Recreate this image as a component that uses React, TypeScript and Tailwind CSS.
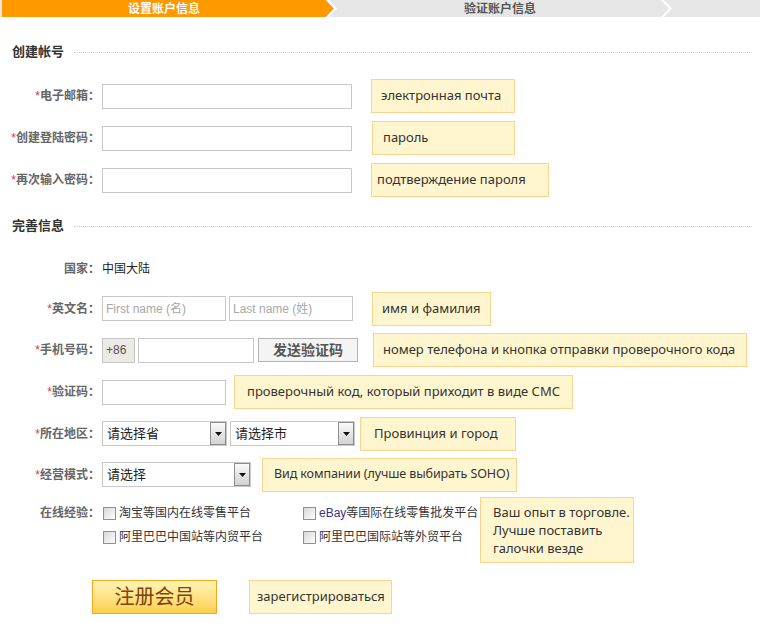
import React from "react";

function Label({ text, req = true }: { text: string; req?: boolean }) {
  return (
    <span className="w-[100px] shrink-0 text-right text-[12px] font-bold text-[#666]">
      {req && <span className="font-normal text-[#e5343a]">*</span>}
      {text}：
    </span>
  );
}

function Note({ className, children }: { className: string; children: React.ReactNode }) {
  return (
    <div
      className={`flex h-[34px] shrink-0 items-center whitespace-nowrap border border-[#f8d48e] bg-[#fff6cf] font-['Noto_Sans',sans-serif] text-[13px] text-[#333] ${className}`}
    >
      {children}
    </div>
  );
}

function Select({ text, className }: { text: string; className: string }) {
  return (
    <div className={`flex h-[25px] items-center justify-between border border-[#c8c8c8] bg-white ${className}`}>
      <span className="pl-[4px] text-[13px] text-[#222]">{text}</span>
      <span className="flex h-[23px] w-[16px] items-center justify-center border border-[#8c8c8c] bg-linear-to-b from-[#fafafa] to-[#d2d2d2]">
        <svg width="7" height="4" viewBox="0 0 7 4">
          <polygon points="0,0 7,0 3.5,4" fill="#111" />
        </svg>
      </span>
    </div>
  );
}

function Check({ children }: { children: React.ReactNode }) {
  return (
    <label className="flex h-[24px] items-center gap-[3px] whitespace-nowrap text-[12px] text-[#333]">
      <span className="ml-[1px] h-[13px] w-[13px] border border-[#8e8f8f] bg-linear-to-br from-[#d8d8d8] to-[#ffffff]" />
      <span>{children}</span>
    </label>
  );
}

function Title({ text, className }: { text: string; className: string }) {
  return (
    <div className={`flex h-[20px] items-center pl-[12px] pr-[8px] ${className}`}>
      <span className="text-[13px] font-bold text-[#333]">{text}</span>
      <span className="ml-[10px] flex-1 border-t border-dotted border-[#cfcfcf]" />
    </div>
  );
}

const input = "h-[25px] border border-[#c8c8c8] bg-white px-[3px] text-[12px] outline-none placeholder:text-[#a8a8a8]";

export default function App() {
  return (
    <div className="h-[630px] w-[760px] overflow-hidden bg-white font-['Liberation_Sans','Noto_Sans_CJK_SC',sans-serif] text-[12px] text-[#333]">
      <div className="flex h-[17px] bg-[#e6e6e6]">
        <div className="ml-[2px] flex w-[324px] items-center justify-center bg-[#ff9900] font-bold text-white">设置账户信息</div>
        <svg width="14" height="17" viewBox="0 0 14 17">
          <polygon points="0,0 8,8.5 0,17" fill="#ff9900" />
          <polygon points="0,0 3,0 11,8.5 3,17 0,17 8,8.5" fill="#fff" />
        </svg>
        <div className="flex w-[320px] items-center justify-center font-bold text-[#555]">验证账户信息</div>
        <svg width="14" height="17" viewBox="0 0 14 17">
          <polygon points="1,0 4,0 12,8.5 4,17 1,17 9,8.5" fill="#fff" />
        </svg>
      </div>

      <Title text="创建帐号" className="mt-[25px]" />

      <div className="mt-[13px] flex h-[42px] items-center">
        <Label text="电子邮箱" />
        <input className={`${input} ml-[2px] w-[250px]`} />
        <Note className="ml-[19px] w-[144px] pl-[9px]">электронная почта</Note>
      </div>
      <div className="flex h-[42px] items-center">
        <Label text="创建登陆密码" />
        <input type="password" className={`${input} ml-[2px] w-[250px]`} />
        <Note className="ml-[20px] w-[143px] pl-[10px]">пароль</Note>
      </div>
      <div className="flex h-[42px] items-center">
        <Label text="再次输入密码" />
        <input type="password" className={`${input} ml-[2px] w-[250px]`} />
        <Note className="ml-[19px] w-[178px] pl-[5px]">подтверждение пароля</Note>
      </div>

      <Title text="完善信息" className="mt-[15px]" />

      <div className="mt-[14px] flex h-[38px] items-center">
        <Label text="国家" req={false} />
        <span className="ml-[2px] text-[12px] text-[#222]">中国大陆</span>
      </div>
      <div className="flex h-[41px] items-center">
        <Label text="英文名" />
        <div className="ml-[2px] flex gap-[3px]">
          <input className={`${input} w-[124px]`} placeholder="First name (名)" />
          <input className={`${input} w-[124px]`} placeholder="Last name (姓)" />
        </div>
        <Note className="ml-[19px] w-[119px] pl-[9px]">имя и фамилия</Note>
      </div>
      <div className="flex h-[42px] items-center">
        <Label text="手机号码" />
        <div className="ml-[2px] flex items-center gap-[3px]">
          <span className="flex h-[25px] w-[33px] items-center border border-[#c8c8c8] bg-[#ebeae5] pl-[3px] text-[12px] text-[#555]">+86</span>
          <input className={`${input} w-[116px]`} />
          <button className="ml-[1px] h-[24px] w-[100px] border border-[#b4b4b4] bg-[#f4f4f4] text-[14px] font-bold text-[#555]">
            发送验证码
          </button>
        </div>
        <Note className="ml-[15px] w-[374px] pl-[9px]">номер телефона и кнопка отправки проверочного кода</Note>
      </div>
      <div className="flex h-[42px] items-center">
        <Label text="验证码" />
        <input className={`${input} ml-[2px] w-[124px]`} />
        <Note className="ml-[8px] w-[339px] pl-[12px]">проверочный код, который приходит в виде СМС</Note>
      </div>
      <div className="flex h-[41px] items-center">
        <Label text="所在地区" />
        <div className="ml-[2px] flex gap-[3px]">
          <Select text="请选择省" className="w-[125px]" />
          <Select text="请选择市" className="w-[125px]" />
        </div>
        <Note className="ml-[5px] w-[156px] pl-[13px]">Провинция и город</Note>
      </div>
      <div className="flex h-[41px] items-center">
        <Label text="经营模式" />
        <Select text="请选择" className="ml-[2px] w-[149px]" />
        <Note className="ml-[11px] w-[255px] pl-[11px]">
          <span className="text-[12.5px] tracking-[-0.1px]">Вид компании (лучше выбирать SOHO)</span>
        </Note>
      </div>

      <div className="mt-[2px] flex items-start">
        <div className="mt-[4px] flex h-[24px] w-[100px] shrink-0 items-center justify-end">
          <span className="text-[12px] font-bold text-[#666]">在线经验：</span>
        </div>
        <div className="ml-[2px] mt-[4px] grid grid-cols-[200px_178px]">
          <Check>淘宝等国内在线零售平台</Check>
          <Check>
            <span className="text-[#34348a]">eBay</span>等国际在线零售批发平台
          </Check>
          <Check>阿里巴巴中国站等内贸平台</Check>
          <Check>阿里巴巴国际站等外贸平台</Check>
        </div>
        <div className="flex h-[66px] w-[154px] shrink-0 flex-col justify-center whitespace-nowrap border border-[#f8d48e] bg-[#fff6cf] pl-[12px] font-['Noto_Sans',sans-serif] text-[13px] leading-[18px] text-[#333]">
          <span>Ваш опыт в торговле.</span>
          <span>Лучше поставить</span>
          <span>галочки везде</span>
        </div>
      </div>

      <div className="mt-[17px] flex items-center pl-[92px]">
        <button className="h-[34px] w-[125px] border border-[#f4a81d] bg-linear-to-b from-[#fff4b4] to-[#ffd04a] text-[20px] text-[#7e420a]">
          注册会员
        </button>
        <Note className="ml-[32px] w-[143px] pl-[7px]">зарегистрироваться</Note>
      </div>
    </div>
  );
}
